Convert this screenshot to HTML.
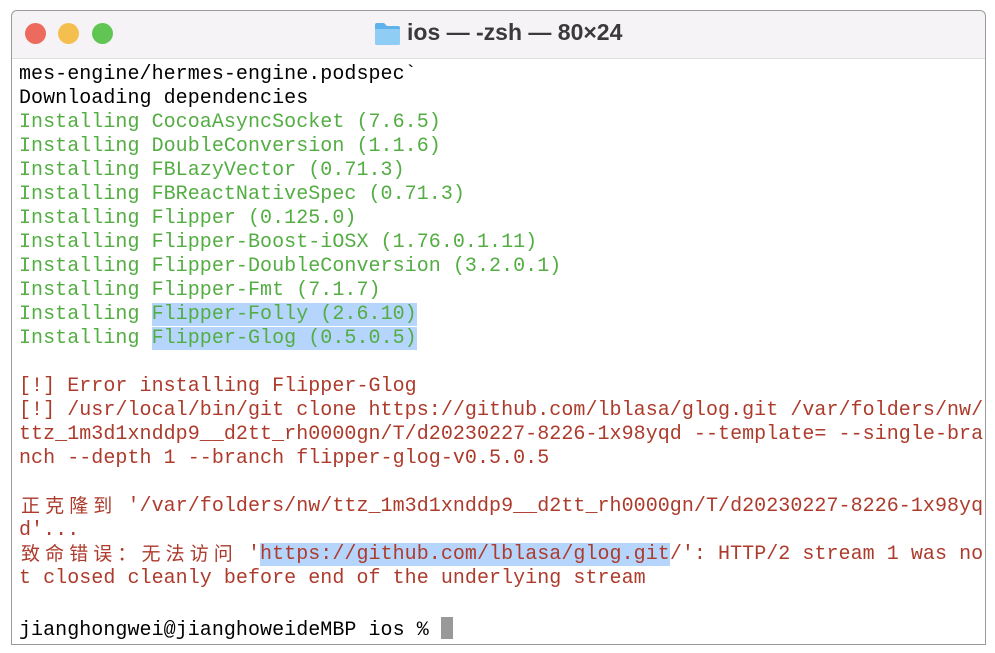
<!DOCTYPE html>
<html><head><meta charset="utf-8"><style>
body{margin:0;width:995px;height:653px;background:#fff;position:relative;overflow:hidden}
.win{position:absolute;left:11px;top:10px;width:973px;height:633px;border:1px solid #9a9a9a;border-radius:6px 6px 0 0;background:#fff}
.tb{position:absolute;left:0;top:0;right:0;height:47px;background:#f6f3f6;border-bottom:1px solid #e0e0e0;border-radius:6px 6px 0 0}
.dot{position:absolute;top:12px;width:21px;height:21px;border-radius:50%}
.title{position:absolute;left:395px;top:8px;font:bold 23px "Liberation Sans",sans-serif;color:#3a3a3a}
.l{position:absolute;left:19px;height:24px;line-height:24px;font:20px "Liberation Mono",monospace;letter-spacing:0.05px;white-space:pre;color:#000}
.g{color:#53ad43}.r{color:#ad3b2c}
.s{background:#b5d5fc}
.cj{position:absolute;height:24px;line-height:24px;font:19px "Noto Sans CJK SC",sans-serif;letter-spacing:5.1px;white-space:pre;color:#ad3b2c}
.cur{display:inline-block;width:12px;height:22px;background:#999;vertical-align:-4px}
</style></head><body>
<div class="win"><div class="tb">
<div class="dot" style="left:13px;background:#ed6a5e"></div>
<div class="dot" style="left:46px;background:#f5bf4f"></div>
<div class="dot" style="left:80px;background:#61c554"></div>
<svg style="position:absolute;left:362px;top:11px" width="27" height="23" viewBox="0 0 27 23"><path d="M1 3a2 2 0 0 1 2-2h7l3 3h11a2 2 0 0 1 2 2v15a2 2 0 0 1-2 2H3a2 2 0 0 1-2-2z" fill="#5fb3ea"/><path d="M1 7h25v14a2 2 0 0 1-2 2H3a2 2 0 0 1-2-2z" fill="#8fcdf5"/></svg>
<div class="title">ios — -zsh — 80×24</div>
</div></div>
<div class="l" style="top:63px">mes-engine/hermes-engine.podspec`</div>
<div class="l" style="top:87px">Downloading dependencies</div>
<div class="l g" style="top:111px">Installing CocoaAsyncSocket (7.6.5)</div>
<div class="l g" style="top:135px">Installing DoubleConversion (1.1.6)</div>
<div class="l g" style="top:159px">Installing FBLazyVector (0.71.3)</div>
<div class="l g" style="top:183px">Installing FBReactNativeSpec (0.71.3)</div>
<div class="l g" style="top:207px">Installing Flipper (0.125.0)</div>
<div class="l g" style="top:231px">Installing Flipper-Boost-iOSX (1.76.0.1.11)</div>
<div class="l g" style="top:255px">Installing Flipper-DoubleConversion (3.2.0.1)</div>
<div class="l g" style="top:279px">Installing Flipper-Fmt (7.1.7)</div>
<div class="l g" style="top:303px">Installing <span class="s">Flipper-Folly (2.6.10)</span></div>
<div class="l g" style="top:327px">Installing <span class="s">Flipper-Glog (0.5.0.5)</span></div>
<div class="l r" style="top:375px">[!] Error installing Flipper-Glog</div>
<div class="l r" style="top:399px">[!] /usr/local/bin/git clone https://github.com/lblasa/glog.git /var/folders/nw/</div>
<div class="l r" style="top:423px">ttz_1m3d1xnddp9__d2tt_rh0000gn/T/d20230227-8226-1x98yqd --template= --single-bra</div>
<div class="l r" style="top:447px">nch --depth 1 --branch flipper-glog-v0.5.0.5</div>
<div class="l r" style="top:495px">         '/var/folders/nw/ttz_1m3d1xnddp9__d2tt_rh0000gn/T/d20230227-8226-1x98yq</div>
<div class="cj" style="left:21px;top:491px">正克隆到</div>
<div class="l r" style="top:519px">d'...</div>
<div class="l r" style="top:543px">                   '<span class="s">https://github.com/lblasa/glog.git</span>/': HTTP/2 stream 1 was no</div>
<div class="cj" style="left:21px;top:539px">致命错误：无法访问</div>
<div class="l r" style="top:567px">t closed cleanly before end of the underlying stream</div>
<div class="l" style="top:617px">jianghongwei@jianghoweideMBP ios % <span class="cur"></span></div>
</body></html>
